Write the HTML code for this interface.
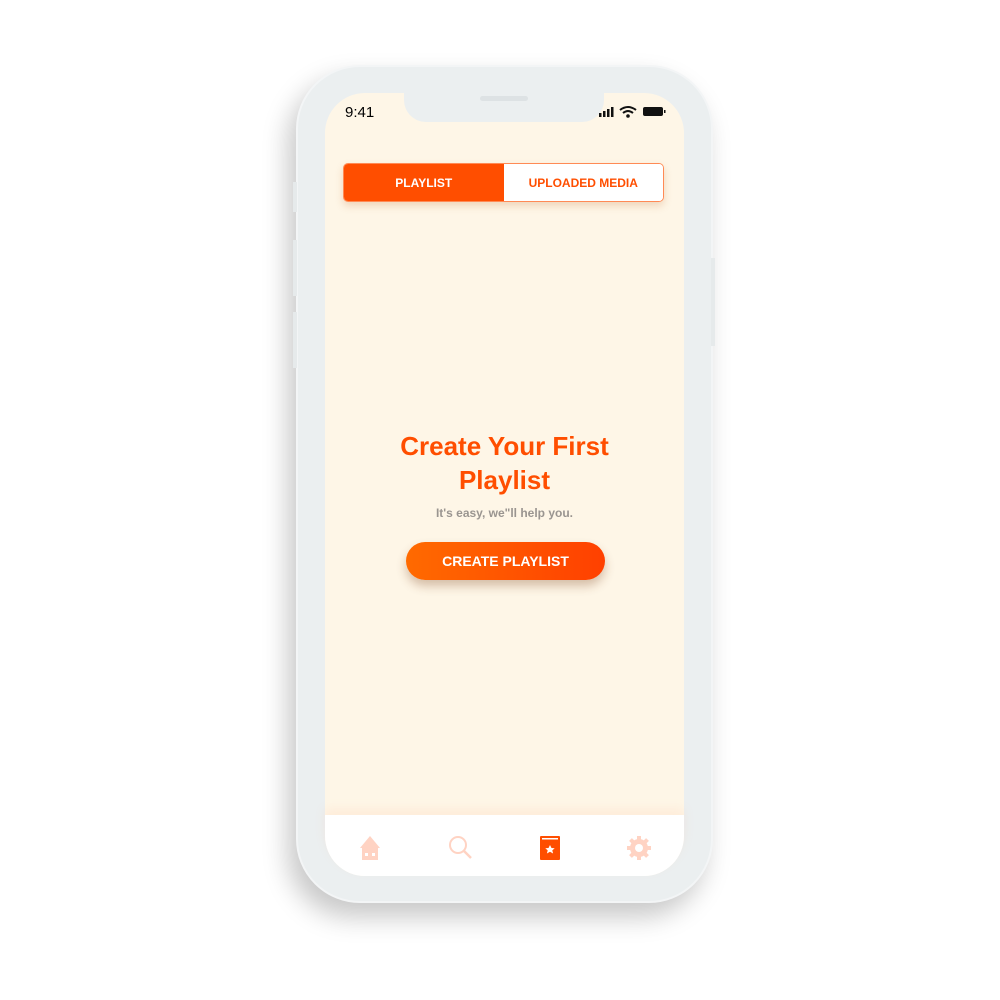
<!DOCTYPE html>
<html><head><style>
*{margin:0;padding:0;box-sizing:border-box}
body{width:1000px;height:1000px;background:#fff;position:relative;overflow:hidden;font-family:"Liberation Sans",sans-serif}
.phone{position:absolute;left:296px;top:65px;width:417px;height:838px;border-radius:64px;background:#ebeff0;box-shadow:-8px 14px 26px rgba(0,0,0,.22);border:2px solid #f3f5f6}
.btn{position:absolute;background:#e6eaeb;width:4px}
.screen{position:absolute;left:325px;top:93px;width:359px;height:783px;border-radius:40px;background:#fef6e7;overflow:hidden}
.notch{position:absolute;left:404px;top:90px;width:200px;height:32px;background:#ebeff0;border-radius:0 0 22px 22px}
.spk{position:absolute;left:480px;top:96px;width:48px;height:5px;border-radius:3px;background:#dde2e4}
.time{position:absolute;left:345px;top:104px;font-size:15px;color:#000}
.seg{position:absolute;left:343px;top:163px;width:321px;height:39px;border-radius:5px;overflow:hidden;display:flex;box-shadow:0 4px 8px rgba(200,120,60,.25);border:1px solid #ff8a55}
.seg div{flex:1;display:flex;align-items:center;justify-content:center;font-weight:bold;font-size:12px}
h1{position:absolute;left:325px;width:359px;top:429px;text-align:center;color:#ff4e00;font-size:26px;line-height:34px;font-weight:bold}
.sub{position:absolute;left:325px;width:359px;top:506px;text-align:center;color:#9a9590;font-size:12px;font-weight:bold}
.cta{position:absolute;left:406px;top:542px;width:199px;height:38px;border-radius:19px;background:linear-gradient(90deg,#ff6a00,#ff4000);color:#fff;font-weight:bold;font-size:14px;display:flex;align-items:center;justify-content:center;box-shadow:0 6px 10px rgba(120,60,20,.3)}
.tab{position:absolute;left:325px;top:815px;width:359px;height:61px;background:#fff;border-radius:0 0 40px 40px;box-shadow:0 -6px 10px rgba(255,180,140,.15)}
</style></head><body>
<div class="phone"></div>
<div class="btn" style="left:293px;top:182px;height:30px"></div>
<div class="btn" style="left:293px;top:240px;height:56px"></div>
<div class="btn" style="left:293px;top:312px;height:56px"></div>
<div class="btn" style="left:711px;top:258px;height:88px"></div>
<div class="screen"></div>
<div class="notch"></div><div class="spk"></div>
<div class="time">9:41</div>
<svg style="position:absolute;left:598px;top:105px" width="70" height="14">
<rect x="1" y="8" width="2.5" height="4" fill="#111"/><rect x="5" y="6" width="2.5" height="6" fill="#111"/><rect x="9" y="4" width="2.5" height="8" fill="#111"/><rect x="13" y="2" width="2.5" height="10" fill="#111"/>
<path d="M22 5 Q30 -1 38 5" stroke="#111" stroke-width="2" fill="none"/><path d="M25 8 Q30 4 35 8" stroke="#111" stroke-width="2" fill="none"/><circle cx="30" cy="11" r="1.8" fill="#111"/>
<rect x="45" y="2" width="20" height="9" rx="2" fill="#111"/><rect x="66" y="5" width="1.5" height="3" fill="#111"/>
</svg>
<div class="seg"><div style="background:#ff4e00;color:#fff">PLAYLIST</div><div style="background:#fff;color:#ff4e00">UPLOADED MEDIA</div></div>
<h1>Create Your First<br>Playlist</h1>
<div class="sub">It's easy, we"ll help you.</div>
<div class="cta">CREATE PLAYLIST</div>
<div class="tab"></div>
<svg style="position:absolute;left:355px;top:832px" width="300" height="32">
<g fill="#ffd3c3">
<path d="M5 16 L15 4 L25 16 Z"/><rect x="7" y="16" width="16" height="12"/>
</g>
<rect x="10" y="21" width="3" height="3" fill="#fff"/><rect x="17" y="21" width="3" height="3" fill="#fff"/>
<circle cx="103" cy="13" r="8" stroke="#ffd3c3" stroke-width="2" fill="none"/><path d="M109 19 L116 26" stroke="#ffd3c3" stroke-width="2.5"/>
<rect x="185" y="4" width="20" height="24" rx="1" fill="#ff4e00"/><rect x="187" y="6" width="16" height="1.5" fill="#fff"/>
<path d="M195 13 l1.5 3 3.2.3-2.4 2.1.8 3.1-3.1-1.7-3.1 1.7.8-3.1-2.4-2.1 3.2-.3z" fill="#fff"/>
<circle cx="284" cy="16" r="9" fill="#ffd3c3"/><g stroke="#ffd3c3" stroke-width="4"><path d="M284 4v24M272 16h24M275.5 7.5l17 17M292.5 7.5l-17 17"/></g><circle cx="284" cy="16" r="4" fill="#fff"/>
</svg>
</body></html>
